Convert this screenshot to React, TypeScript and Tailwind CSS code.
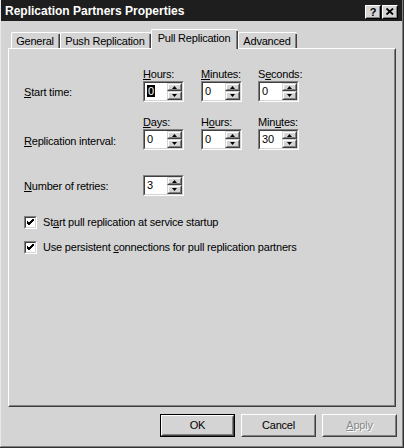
import React from "react";

const FONT = "font-['Liberation_Sans',Arial,sans-serif]";

function Arrow({ up }: { up?: boolean }) {
  return (
    <svg width="5" height="3" viewBox="0 0 5 3" className="block">
      {up ? <polygon points="2.5,0 5,3 0,3" fill="#000" /> : <polygon points="0,0 5,0 2.5,3" fill="#000" />}
    </svg>
  );
}

function SpinBtn({ up, h }: { up?: boolean; h: string }) {
  return (
    <div className={`${h} border border-t-[#d4d4d4] border-l-[#d4d4d4] border-b-[#404040] border-r-[#404040]`}>
      <div className="h-full bg-[#d4d4d4] border border-t-white border-l-white border-b-[#808080] border-r-[#808080] flex items-center justify-center">
        <Arrow up={up} />
      </div>
    </div>
  );
}

function Spin({ value, focused }: { value: string; focused?: boolean }) {
  return (
    <div className="w-[41px] h-[21px] border border-t-[#808080] border-l-[#808080] border-b-white border-r-white">
      <div className="h-full flex bg-white border border-t-[#404040] border-l-[#404040] border-b-[#d4d4d4] border-r-[#d4d4d4]">
        <div className="flex-1 pl-[2px] pt-[1px] leading-[15px] text-black">
          {focused ? <span className="bg-black text-white px-[1px]">{value}</span> : value}
        </div>
        <div className="w-[15px] flex flex-col">
          <SpinBtn up h="h-[8px]" />
          <SpinBtn h="h-[9px]" />
        </div>
      </div>
    </div>
  );
}

function Check({ children }: { children: React.ReactNode }) {
  return (
    <div className="flex items-center h-[13px]">
      <div className="w-[13px] h-[13px] border border-t-[#808080] border-l-[#808080] border-b-white border-r-white">
        <div className="h-full bg-white border border-t-[#404040] border-l-[#404040] border-b-[#d4d4d4] border-r-[#d4d4d4] flex items-center justify-center">
          <svg width="7" height="7" viewBox="0 0 7 7" className="block">
            <path d="M0 2 L2 4 L7 -1 M0 3 L2 5 L7 0 M0 4 L2 6 L7 1" stroke="#000" strokeWidth="1" fill="none" />
          </svg>
        </div>
      </div>
      <div className="ml-[6px] leading-[13px]">{children}</div>
    </div>
  );
}

function Tab({ label, w, selected }: { label: string; w: string; selected?: boolean }) {
  return (
    <div
      className={`${w} ${
        selected ? "h-[20px] mb-[-1px] relative z-10" : "h-[16px]"
      } bg-[#d4d4d4] border-t border-l border-t-white border-l-white rounded-tl-[2px] rounded-tr-[2px] flex`}
    >
      <div className="flex-1 flex items-start justify-center pt-[2px] leading-[13px]">{label}</div>
      <div className="w-[2px] border-r border-r-[#404040] bg-[#d4d4d4] border-l border-l-[#808080] mt-[1px]" />
    </div>
  );
}

function Btn({ children, def, disabled }: { children: React.ReactNode; def?: boolean; disabled?: boolean }) {
  return (
    <div className={`w-[75px] h-[23px] ${def ? "border border-black" : ""}`}>
      <div className="h-full border border-t-white border-l-white border-b-[#404040] border-r-[#404040]">
        <div
          className={`h-full border border-t-[#d4d4d4] border-l-[#d4d4d4] border-b-[#808080] border-r-[#808080] flex items-center justify-center ${
            disabled ? "text-[#888888] [text-shadow:1px_1px_0_#ffffff]" : "text-black"
          }`}
        >
          {children}
        </div>
      </div>
    </div>
  );
}

function TitleBtn({ children }: { children: React.ReactNode }) {
  return (
    <div className="w-[16px] h-[14px] border border-t-white border-l-white border-b-black border-r-black">
      <div className="h-full bg-[#d4d4d4] border border-t-[#d4d4d4] border-l-[#d4d4d4] border-b-[#808080] border-r-[#808080] flex items-center justify-center text-black font-bold text-[11px] leading-[10px]">
        {children}
      </div>
    </div>
  );
}

export default function App() {
  return (
    <div className={`${FONT} text-[11px] tracking-[-0.2px] text-black w-[404px] h-[448px] bg-[#d4d4d4] border-r border-b border-r-[#303030] border-b-[#303030]`}>
      <div className="h-full border-l border-r border-b border-l-[#e8e8e8] border-r-[#808080] border-b-[#808080] flex flex-col">
        <div className="h-[21px] bg-[#1e1e1e] flex items-center pl-[4px] pr-[4px]">
          <div className="flex-1 text-white font-bold text-[12px] tracking-normal leading-[14px] pt-[1px]">Replication Partners Properties</div>
          <div className="flex gap-[1px] mt-[2px]">
            <TitleBtn>?</TitleBtn>
            <TitleBtn>
              <svg width="8" height="7" viewBox="0 0 8 7" className="block">
                <path d="M0.5 0.5 L7 6.5 M7 0.5 L0.5 6.5" stroke="#000" strokeWidth="1.8" />
              </svg>
            </TitleBtn>
          </div>
        </div>
        <div className="flex flex-col pl-[7px] pr-[6px] pt-[8px]">
          <div className="flex items-end h-[19px] pl-[3px]">
            <Tab label="General" w="w-[49px]" />
            <Tab label="Push Replication" w="w-[91px]" />
            <Tab label="Pull Replication" w="w-[87px]" selected />
            <Tab label="Advanced" w="w-[59px]" />
          </div>
          <div className="h-[359px] border border-t-white border-l-white border-b-[#404040] border-r-[#404040]">
            <div className="h-full border border-t-[#d4d4d4] border-l-[#d4d4d4] border-b-[#808080] border-r-[#808080] pl-[14px] pt-[17px] flex flex-col">
              <div className="flex h-[14px] leading-[14px]">
                <div className="w-[119px]" />
                <div className="w-[58px]"><u>H</u>ours:</div>
                <div className="w-[57px]"><u>M</u>inutes:</div>
                <div>S<u>e</u>conds:</div>
              </div>
              <div className="flex items-center h-[21px]">
                <div className="w-[119px] pt-[2px]"><u>S</u>tart time:</div>
                <div className="w-[58px]"><Spin value="0" focused /></div>
                <div className="w-[57px]"><Spin value="0" /></div>
                <div><Spin value="0" /></div>
              </div>
              <div className="flex h-[14px] leading-[14px] mt-[13px]">
                <div className="w-[119px]" />
                <div className="w-[58px]"><u>D</u>ays:</div>
                <div className="w-[57px]">H<u>o</u>urs:</div>
                <div>Min<u>u</u>tes:</div>
              </div>
              <div className="flex items-center h-[21px]">
                <div className="w-[119px] pt-[3px]"><u>R</u>eplication interval:</div>
                <div className="w-[58px]"><Spin value="0" /></div>
                <div className="w-[57px]"><Spin value="0" /></div>
                <div><Spin value="30" /></div>
              </div>
              <div className="flex items-center h-[21px] mt-[25px]">
                <div className="w-[119px] pt-[2px]"><u>N</u>umber of retries:</div>
                <div><Spin value="3" /></div>
              </div>
              <div className="mt-[20px]">
                <Check>St<u>a</u>rt pull replication at service startup</Check>
              </div>
              <div className="mt-[12px]">
                <Check>Use persistent <u>c</u>onnections for pull replication partners</Check>
              </div>
            </div>
          </div>
          <div className="flex justify-end gap-[6px] mt-[7px] mr-[-1px]">
            <Btn def>OK</Btn>
            <Btn>Cancel</Btn>
            <Btn disabled><u>A</u>pply</Btn>
          </div>
        </div>
      </div>
    </div>
  );
}
